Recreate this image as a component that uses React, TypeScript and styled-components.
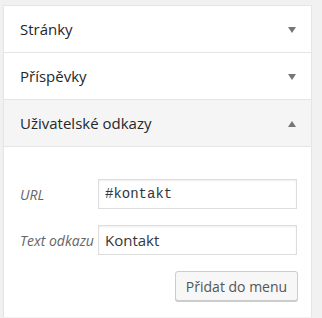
import React from 'react';
import styled, { createGlobalStyle } from 'styled-components';

const Global = createGlobalStyle`
  html, body { margin: 0; padding: 0; background: #f1f1f1; }
  body { font-family: "Open Sans", "Noto Sans", sans-serif; }
`;

const Panel = styled.div`
  margin: 5px 10px 0 3px;
  width: 307px;
  background: #fff;
  border: 1px solid #e5e5e5;
  border-bottom: none;
  box-shadow: 0 1px 1px rgba(0, 0, 0, 0.04);
`;

const Header = styled.div<{ $open?: boolean }>`
  height: 46px;
  display: flex;
  align-items: center;
  justify-content: space-between;
  padding: 0 15px 0 16px;
  border-bottom: 1px solid #e5e5e5;
  background: ${p => (p.$open ? '#f5f5f5' : '#fff')};
  color: #23282d;
  font-size: 15px;
  font-weight: 400;
`;

const Arrow = styled.span<{ $up?: boolean }>`
  width: 0;
  height: 0;
  border-left: 4.5px solid transparent;
  border-right: 4.5px solid transparent;
  ${p =>
    p.$up
      ? 'border-bottom: 6px solid #72777c;'
      : 'border-top: 6px solid #72777c;'}
  margin-top: 2px;
`;

const Body = styled.div`
  padding: 32px 14px 16px 16px;
  display: flex;
  flex-direction: column;
  gap: 16px;
`;

const Row = styled.div`
  display: grid;
  grid-template-columns: 78px 199px;
  align-items: center;
`;

const Label = styled.label`
  font-style: italic;
  font-size: 14px;
  color: #666;
  white-space: nowrap;
`;

const Input = styled.input<{ $mono?: boolean }>`
  box-sizing: border-box;
  width: 199px;
  height: 30px;
  margin: 0;
  border: 1px solid #ddd;
  box-shadow: inset 0 1px 2px rgba(0, 0, 0, 0.07);
  background: #fff;
  color: #32373c;
  padding: 0 6px;
  font-family: ${p => (p.$mono ? '"Liberation Mono", "DejaVu Sans Mono", monospace' : '"Open Sans", sans-serif')};
  font-size: ${p => (p.$mono ? '14px' : '15px')};
  outline: none;
`;

const Actions = styled.div`
  display: flex;
  justify-content: flex-end;
  width: 278px;
`;

const Button = styled.button`
  box-sizing: border-box;
  height: 30px;
  width: 123px;
  padding: 0 6px;
  border: 1px solid #ccc;
  border-radius: 3px;
  background: #f7f7f7;
  box-shadow: 0 1px 0 #ccc;
  color: #555;
  font-family: "Open Sans", sans-serif;
  font-size: 14px;
  white-space: nowrap;
`;

export default function App() {
  return (
    <>
      <Global />
      <Panel>
        <Header>
          Stránky
          <Arrow />
        </Header>
        <Header>
          Příspěvky
          <Arrow />
        </Header>
        <Header $open>
          Uživatelské odkazy
          <Arrow $up />
        </Header>
        <Body>
          <Row>
            <Label>URL</Label>
            <Input $mono defaultValue="#kontakt" />
          </Row>
          <Row>
            <Label>Text odkazu</Label>
            <Input defaultValue="Kontakt" />
          </Row>
          <Actions>
            <Button>Přidat do menu</Button>
          </Actions>
        </Body>
      </Panel>
    </>
  );
}
